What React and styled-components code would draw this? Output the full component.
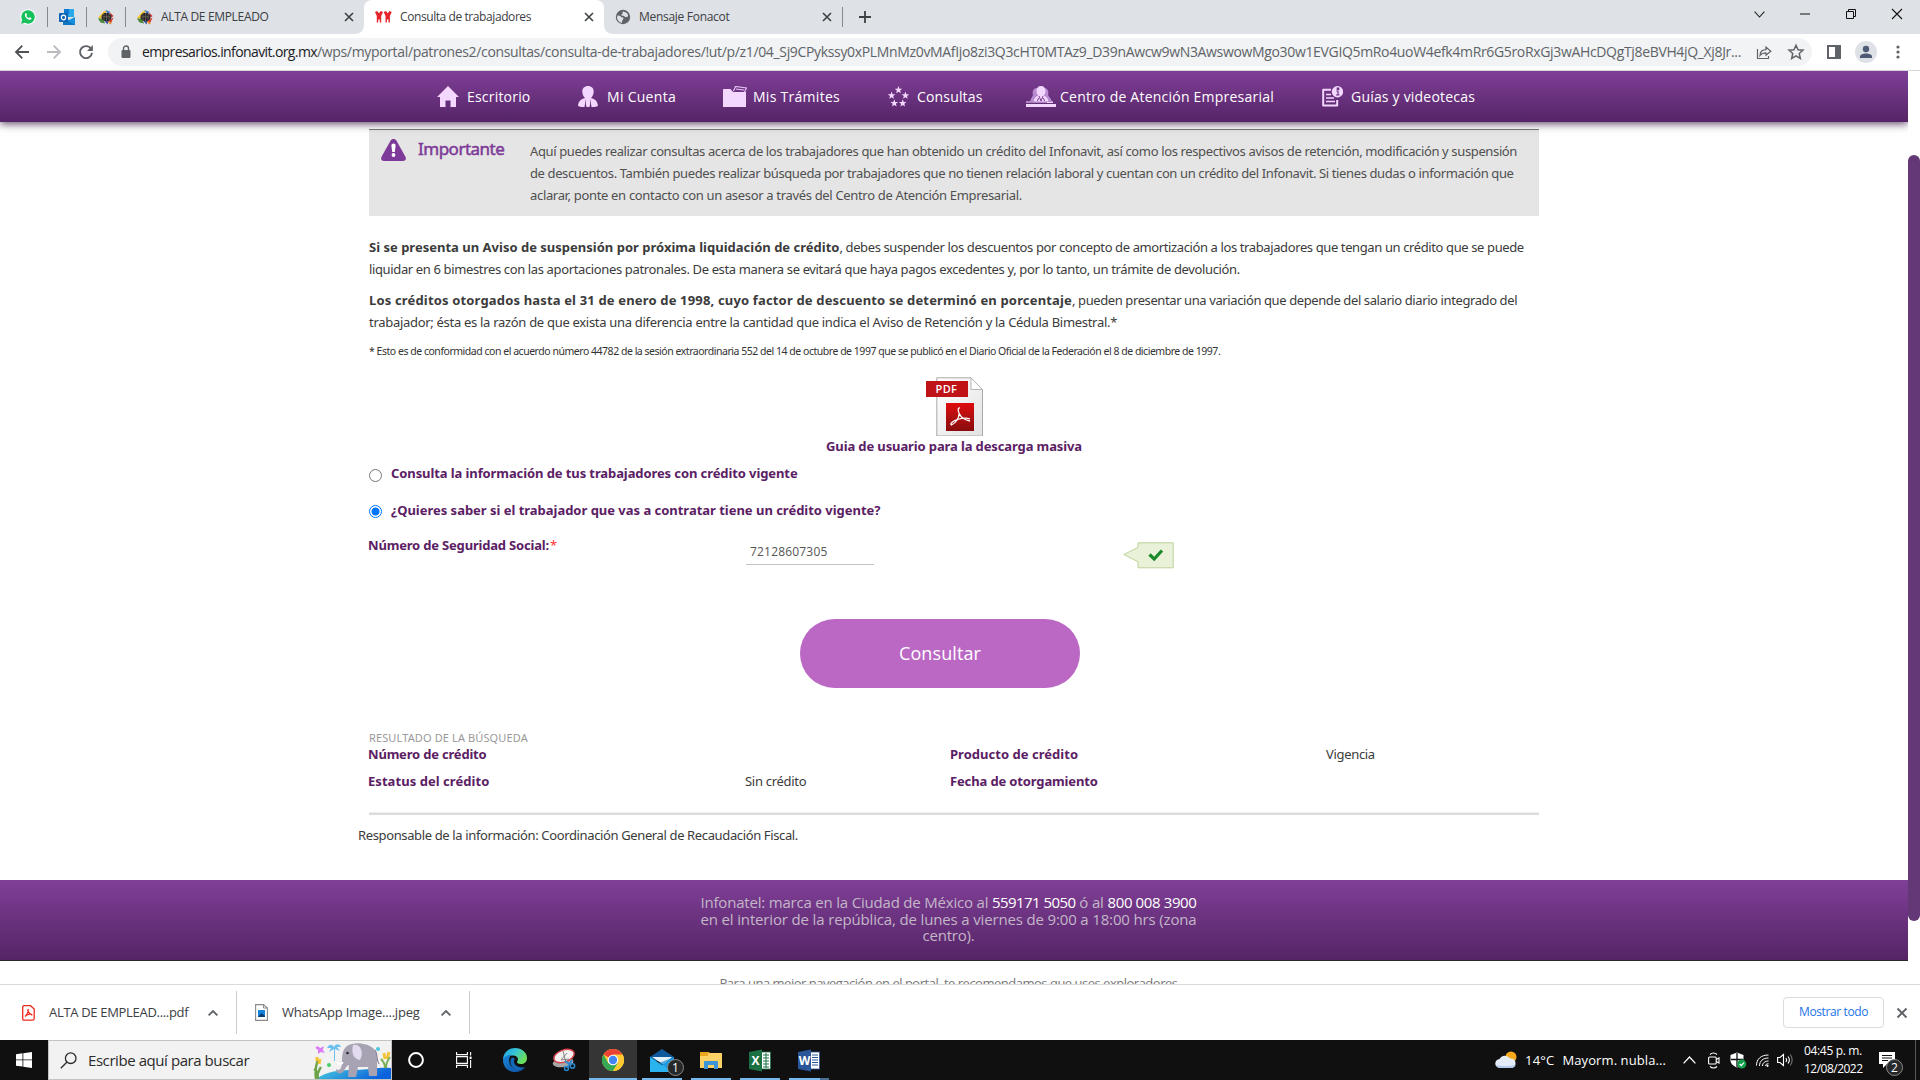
import React from "react";
import styled, { createGlobalStyle, css } from "styled-components";

const ui = '"Open Sans", "Noto Sans", sans-serif';
const body = '"Noto Sans", "Open Sans", sans-serif';

const Global = createGlobalStyle`
  *, *::before, *::after { box-sizing: border-box; }
  html, body { margin: 0; height: 1080px; overflow: hidden; background: #fff; }
  svg { display: block; flex: none; }
`;

const Screen = styled.div`
  width: 1920px;
  height: 1080px;
  display: flex;
  flex-direction: column;
  overflow: hidden;
  font-family: ${ui};
`;

/* Text run with its own tracking. */
const T = styled.span`
  white-space: pre;
  letter-spacing: ${(p) => p.$ls || 0}px;
`;
const Space = styled.i`
  width: ${(p) => p.$w}px;
  flex: none;
`;

/* ---------- browser tabs ---------- */
const TabStrip = styled.div`
  height: 34px;
  flex: none;
  background: #dee1e6;
  display: flex;
  color: #3c4043;
  font-size: 12px;
`;
const Divider = styled.i`
  width: 1px;
  height: 20px;
  background: #85888d;
  flex: none;
`;
const PinnedTab = styled.div`
  width: ${(p) => p.$w}px;
  padding-left: ${(p) => p.$pad}px;
  display: flex;
  align-items: center;
  justify-content: space-between;
`;
const Tab = styled.div`
  width: ${(p) => p.$w}px;
  display: flex;
  align-items: center;
  padding: 0 7px 0 11px;
  position: relative;
  svg:last-of-type { margin-left: auto; }
  ${(p) =>
    p.$active &&
    css`
      background: #fff;
      border-radius: 8px 8px 0 0;
      &::before, &::after {
        content: "";
        position: absolute;
        bottom: 0;
        width: 8px;
        height: 8px;
      }
      &::before { left: -8px; background: radial-gradient(circle at 0 0, transparent 7.5px, #fff 8px); }
      &::after { right: -8px; background: radial-gradient(circle at 100% 0, transparent 7.5px, #fff 8px); }
    `}
`;
const TabTitle = styled.span`
  margin-left: 8px;
  line-height: 34px;
`;
const NewTab = styled.div`
  display: flex;
  align-items: center;
  padding-left: 0;
`;
const WindowControls = styled.div`
  margin-left: auto;
  display: grid;
  grid-template-columns: repeat(4, 46px);
  height: 28px;
  justify-items: center;
  align-items: center;
`;

/* ---------- address bar ---------- */
const Toolbar = styled.div`
  height: 37px;
  flex: none;
  border-bottom: 1px solid #d5d6d8;
  display: flex;
  align-items: center;
  padding-left: 14px;
`;
const NavButtons = styled.div`
  display: flex;
  gap: 16px;
  width: 94px;
`;
const Address = styled.div`
  width: 1704px;
  height: 28px;
  border-radius: 14px;
  background: #f1f3f4;
  display: flex;
  align-items: center;
  padding: 0 9px 0 13px;
  font-size: 14px;
  line-height: 28px;
  color: #5f6368;
`;
const Url = styled.div`
  margin-left: 11px;
  width: 1614px;
  flex: none;
  white-space: nowrap;
  b { font-weight: 400; color: #202124; }
`;
const Tools = styled.div`
  flex: 1;
  display: flex;
  align-items: center;
  padding-left: 15px;
`;
const Avatar = styled.div`
  width: 22px;
  height: 22px;
  border-radius: 50%;
  background: #dee1e6;
  margin: 0 19px 0 14px;
`;

/* ---------- portal ---------- */
const Viewport = styled.div`
  height: 913px;
  flex: none;
  display: flex;
  overflow: hidden;
`;
const Page = styled.div`
  width: 1908px;
  height: 913px;
  overflow: hidden;
`;
const Scrollbar = styled.div`
  width: 12px;
  padding-top: 84px;
  background: #fff;
`;
const Thumb = styled.div`
  height: 766px;
  border-radius: 6px;
  background: #643876;
`;
const Menu = styled.nav`
  height: 51px;
  background: linear-gradient(#7f3f97, #552466);
  box-shadow: 0 2px 8px rgba(50, 20, 60, 0.75);
  position: relative;
  display: grid;
  grid-template-columns: 141px 145px 165px 138px 296px 1fr;
  padding-left: 437px;
  color: #fff;
  font-size: 14px;
`;
const MenuItem = styled.a`
  display: flex;
  align-items: center;
  height: 51px;
  svg { margin-right: ${(p) => p.$gap}px; }
`;
const Content = styled.main`
  margin: 7px 0 0 369px;
  width: 1170px;
  font-family: ${body};
  font-size: 13px;
  line-height: 22px;
  color: #3b3b3b;
`;
const Notice = styled.section`
  height: 87px;
  border-top: 1px solid #7b7b7b;
  background: #e5e5e5;
  display: grid;
  grid-template-columns: 37px 112px 1fr;
  padding: 9px 0 0 12px;
  color: #505050;
`;
const NoticeTitle = styled.h2`
  margin: 0;
  font-size: 17px;
  line-height: 18px;
  padding-top: 1px;
  font-weight: 400;
  color: #7d3a98;
  -webkit-text-stroke: 0.5px #7d3a98;
`;
const NoticeText = styled.div`
  padding-top: 1px;
`;
const Line = styled.div`
  white-space: nowrap;
`;
const Paragraph = styled.div`
  margin-top: ${(p) => p.$mt}px;
  b { font-weight: 700; }
`;
const Footnote = styled.div`
  margin-top: 8px;
  font-size: 10.5px;
  line-height: 20px;
  color: #333;
  white-space: nowrap;
`;
const Purple = styled.span`
  margin-left: ${(p) => p.$pull || 0}px;
  font-weight: 700;
  color: #5b2064;
  white-space: nowrap;
`;
const Guide = styled.div`
  margin-top: 16px;
  display: flex;
  flex-direction: column;
  align-items: center;
  line-height: 20px;
  svg { margin-left: 2px; }
`;
const RadioRow = styled.label`
  margin-top: ${(p) => p.$mt}px;
  display: flex;
  height: 20px;
  line-height: 20px;
`;
const Radio = styled.i`
  width: 13px;
  height: 13px;
  margin: ${(p) => p.$top}px 9px 0 0;
  border-radius: 50%;
  border: 1px solid ${(p) => (p.$on ? "#0075ff" : "#767676")};
  background: ${(p) => (p.$on ? "radial-gradient(circle, #0075ff 3.6px, #fff 4.4px)" : "#fff")};
`;
const FieldRow = styled.div`
  margin-top: 15px;
  height: 36px;
  display: grid;
  grid-template-columns: 377px 377px auto;
  line-height: 20px;
`;
const Required = styled.span`
  color: #f33;
  font-weight: 400;
  margin-left: 1px;
`;
const Input = styled.div`
  width: 128px;
  height: 25px;
  margin-top: 5px;
  border-bottom: 1px solid #c4c4c4;
  padding-left: 4px;
  line-height: 23px;
  font-size: 12px;
  font-family: ${ui};
  color: #555;
`;
const Validation = styled.div`
  padding-top: 7px;
`;
const Submit = styled.div`
  width: 280px;
  height: 69px;
  margin: 48px 0 0 431px;
  border-radius: 34.5px;
  background: #ba68c4;
  color: #fff;
  font: 400 18px/69px ${ui};
  text-align: center;
`;
const ResultTitle = styled.div`
  margin-top: 43px;
  font-size: 11px;
  line-height: 14px;
  color: #999;
`;
const Results = styled.div`
  display: grid;
  grid-template-columns: 376px 205px 376px 1fr;
  grid-auto-rows: 18px;
  row-gap: 9px;
  line-height: 18px;
`;
const Rule = styled.div`
  margin-top: 22px;
  height: 3px;
  background: #dcdcdc;
  border-top: 1px solid #eee;
`;
const Owner = styled.div`
  margin: 10px 0 0 -11px;
  line-height: 20px;
`;
const Footer = styled.footer`
  margin-top: 35px;
  height: 81px;
  border-bottom: 1px solid #2a2a2a;
  background: linear-gradient(#7f3f97, #552466);
  padding: 14px 0 0 698px;
  color: #c3b7c8;
  font-size: 15px;
  line-height: 16.5px;
  b { font-weight: 400; color: #fff; }
`;
const FooterText = styled.div`
  width: 501px;
  text-align: center;
  white-space: nowrap;
`;
const Advice = styled.div`
  margin: 12px 0 0 698px;
  width: 501px;
  text-align: center;
  white-space: nowrap;
  color: #777;
  font: 400 13px/20px ${ui};
`;

/* ---------- downloads ---------- */
const Downloads = styled.div`
  height: 56px;
  flex: none;
  border-top: 1px solid #d9dadc;
  display: flex;
  align-items: center;
  font-size: 13px;
  color: #3c4043;
`;
const Download = styled.div`
  width: ${(p) => p.$w}px;
  height: 43px;
  border-right: 1px solid #c9cbce;
  padding: 0 18px 0 ${(p) => p.$pad}px;
  display: flex;
  align-items: center;
  svg:last-child { margin-left: auto; }
`;
const FileName = styled.span`
  margin: -2px 0 0 14px;
`;
const ShowAll = styled.div`
  margin-left: auto;
  width: 101px;
  height: 31px;
  border: 1px solid #dadce0;
  border-radius: 4px;
  color: #1a73e8;
  font-size: 12px;
  line-height: 28px;
  text-align: center;
`;
const CloseBar = styled.div`
  width: 36px;
  display: flex;
  justify-content: center;
`;

/* ---------- taskbar ---------- */
const Taskbar = styled.div`
  height: 40px;
  flex: none;
  background: #101010;
  display: flex;
  color: #fff;
`;
const Search = styled.div`
  width: 344px;
  border: 1px solid #c4c4c4;
  background: #f2f2f2;
  color: #2b2b2b;
  font-size: 15px;
  line-height: 38px;
  display: flex;
  align-items: center;
  padding-left: 11px;
  overflow: hidden;
  svg:last-child { margin-left: auto; }
`;
const Query = styled.span`
  margin-left: 11px;
`;
const TaskButton = styled.div`
  width: 48px;
  height: 40px;
  margin-right: ${(p) => p.$mr ?? 1}px;
  display: flex;
  align-items: center;
  justify-content: center;
  background: ${(p) => (p.$active ? "#353535" : "transparent")};
  position: relative;
  ${(p) =>
    p.$open &&
    css`
      &::after {
        content: "";
        position: absolute;
        bottom: 0;
        height: 2px;
        width: ${p.$active ? 48 : 40}px;
        background: ${p.$multi ? "linear-gradient(90deg, #76b9ed 31px, #4a6f91 31px)" : "#76b9ed"};
      }
    `}
`;
const Count = styled.span`
  position: absolute;
  left: ${(p) => p.$x}px;
  top: ${(p) => p.$y}px;
  width: 17px;
  height: 17px;
  border-radius: 50%;
  border: 1px solid #8a8a8a;
  background: #26282a;
  color: #fff;
  font-size: 12px;
  line-height: 15px;
  text-align: center;
`;
const Tray = styled.div`
  margin-left: auto;
  display: flex;
  align-items: center;
  font-size: 13px;
`;
const Weather = styled.div`
  display: flex;
  align-items: center;
  width: 188px;
`;
const Status = styled.div`
  display: grid;
  grid-template-columns: 25px 22px 26px 21px 27px;
  align-items: center;
`;
const Clock = styled.div`
  font-size: 12px;
  line-height: 18px;
  width: 75px;
  display: flex;
  flex-direction: column;
  align-items: flex-start;
`;
const Alerts = styled.div`
  width: 37px;
  height: 40px;
  padding-top: 12px;
  border-right: 1px solid #5a5a5a;
  margin-right: 4px;
  position: relative;
`;

/* ---------- drawings ---------- */
const Close = ({ s = 8, c = "#3c4043", box = 16, sw = 1.6 }) => (
  <svg width={box} height={box} viewBox={`${-box / 2} ${-box / 2} ${box} ${box}`}>
    <path d={`M${-s / 2} ${-s / 2}L${s / 2} ${s / 2}M${s / 2} ${-s / 2}L${-s / 2} ${s / 2}`} stroke={c} strokeWidth={sw} />
  </svg>
);
const WhatsApp = () => (
  <svg width="16" height="16" viewBox="0 0 16 16">
    <circle cx="8" cy="8" r="7.8" fill="#fff" />
    <path d="M1.2 14.8l1-3.6A6.7 6.7 0 1 1 4.8 13.8z" fill="#16c05b" />
    <path d="M5.3 4.4c.5-.5 1-.3 1.2.2l.5 1.2c.1.5-.5.8-.6 1.1.5 1 1.4 1.8 2.4 2.2.4-.1.6-.8 1.1-.8l1.4.7c.4.3 0 1.2-.5 1.5-1.2.8-3 .1-4.300-1.200S4.300 5.500 5.300 4.400z" fill="#fff" />
  </svg>
);
const Outlook = () => (
  <svg width="16" height="16" viewBox="0 0 16 16">
    <path d="M5 0h10v8H5z" fill="#28a8ea" />
    <path d="M5 0h5v5H5z" fill="#0f78d4" />
    <path d="M4 8l6 3 6-3v8H4z" fill="#1490df" />
    <path d="M4 9l12 7H4z" fill="#0a5ba8" opacity=".5" />
    <rect x="0" y="4" width="9" height="9" rx=".8" fill="#0f64b5" />
    <ellipse cx="4.500" cy="8.500" rx="2.100" ry="2.400" fill="none" stroke="#fff" strokeWidth="1.200" />
  </svg>
);
const Emblem = () => (
  <svg width="16" height="16" viewBox="0 0 16 16">
    <path d="M0 9l5-6 4-2-4 9z" fill="#f2c230" />
    <path d="M7 1l5 1.500-1 3z" fill="#3f79c4" />
    <path d="M0 9.500l5 0 2 5-4.500-1z" fill="#4d8a3b" />
    <path d="M9.500 12l6-3.500-3 7z" fill="#d53a2c" />
    <path d="M11.500 3l4 4-2 1.500z" fill="#c9332c" />
    <path d="M6.500 12l4 0-1 3.500z" fill="#3b57b0" />
    <path d="M11 12l3 3-4-1z" fill="#e9b52b" />
    <ellipse cx="8.500" cy="8" rx="5" ry="4.300" fill="#24262b" />
    <path d="M6 5v6M8.500 4v8M11 5v6M4.500 7.800h8" stroke="#776a55" strokeWidth=".7" />
  </svg>
);
const Infonavit = () => (
  <svg width="17" height="12" viewBox="0 0 17 12" fill="#e5252c">
    <path d="M0 1l2.200-1L4 2.300 5.800 0 8 1 6.200 5v6.500H4.800V8.500H3.200v3H1.800V5z" />
    <path d="M8.700 1l2.200-1 1.800 2.300L14.500 0l2.200 1-1.800 4v6.500h-1.400V8.500h-1.600v3h-1.400V5z" />
  </svg>
);
const Globe = () => (
  <svg width="16" height="16" viewBox="0 0 16 16">
    <circle cx="8" cy="8" r="7.200" fill="#5f6368" />
    <path d="M2.500 6.500c2 0 3 .5 3.500 1.500l2 .5c1 .8.300 2-.5 2.500l-.8 3c-2.500-.5-4.600-3-4.700-5.500zM8 2.500c-1 1 0 1.500-.5 2.300L6 6c.5 1 2 .5 3 1l1.500 1.200 2.500-.7c.5-2.500-1.500-4.500-5-5z" fill="#dee1e6" />
  </svg>
);
const Arrow = ({ flip, c }) => (
  <svg width="16" height="16" viewBox="0 0 16 16" fill="none" stroke={c} strokeWidth="1.800" transform={flip ? "scale(-1 1)" : undefined}>
    <path d="M15 8H2M8.300 1.700L2 8l6.300 6.300" />
  </svg>
);
const Reload = () => (
  <svg width="16" height="16" viewBox="0 0 16 16">
    <path d="M13.300 5.200A6 6 0 1 0 14 8.800" fill="none" stroke="#5f6368" strokeWidth="1.900" />
    <path d="M14.900 1v6H9z" fill="#5f6368" />
  </svg>
);
const Lock = () => (
  <svg width="10" height="14" viewBox="0 0 10 14">
    <rect x=".5" y="5" width="9" height="8" rx="1" fill="#5f6368" />
    <path d="M2.500 5V3.500a2.500 2.500 0 0 1 5 0V5" fill="none" stroke="#5f6368" strokeWidth="1.400" />
  </svg>
);
const Share = () => (
  <svg width="16" height="16" viewBox="0 0 16 16" fill="none" stroke="#5f6368" strokeWidth="1.200">
    <path d="M1.500 5v9.500h11V12M4 11.500c.3-4 2.500-5.800 6-5.800V3l4.800 4.300L10 11.300V8.800c-3 0-4.500.8-6 2.700z" />
  </svg>
);
const Star = () => (
  <svg width="18" height="18" viewBox="0 0 24 24" fill="none" stroke="#5f6368" strokeWidth="2">
    <path d="M12 3l2.700 6 6.600.6-5 4.400 1.500 6.500L12 17.100 6.200 20.500l1.500-6.500-5-4.400 6.600-.6z" />
  </svg>
);
const SidePanel = () => (
  <svg width="14" height="14" viewBox="0 0 14 14">
    <path fillRule="evenodd" d="M0 0h14v14H0zM2 2v10h6V2z" fill="#5f6368" />
  </svg>
);
const House = () => (
  <svg width="22" height="21" viewBox="0 0 22 21"><path d="M11 0l11 11h-3v10h-5.500v-6.500h-5V21H3V11H0z" fill="#f3d7ff" /></svg>
);
const Person = () => (
  <svg width="20" height="21" viewBox="0 0 20 21">
    <path fill="#f3d7ff" d="M10 0c3.500 0 5.700 2.300 5.700 5.500 0 2.500-1.200 5-2.700 6.500 4 1.300 6.500 3 7 8-2 1-4.500 1-7 1H7c-2.500 0-5 0-7-1 .5-5 3-6.700 7-8-1.500-1.500-2.700-4-2.700-6.500C4.300 2.300 6.500 0 10 0z" />
    <path d="M8 12.500L6.500 21h2l-.6-2.500zM12 12.500l1.500 8.500h-2l.6-2.500z" fill="#5e2a70" />
  </svg>
);
const Folder = () => (
  <svg width="24" height="21" viewBox="0 0 24 21">
    <path d="M0 3.500L1 3h6.500L10 6h13v15H0z" fill="#f3d7ff" />
    <path d="M10.500 5l2-4.500 11 1.500-2 4M13 3l8 1" stroke="#e5c5f2" strokeWidth="1.200" fill="none" />
  </svg>
);
const starPoints = (cx, cy, r) =>
  Array.from({ length: 10 }, (_, i) => {
    const a = (Math.PI / 5) * i - Math.PI / 2;
    const q = i % 2 ? r * 0.42 : r;
    return `${(cx + q * Math.cos(a)).toFixed(2)},${(cy + q * Math.sin(a)).toFixed(2)}`;
  }).join(" ");
const Stars = () => (
  <svg width="21" height="21" viewBox="0 0 21 21" fill="#f3d7ff">
    {[[10.5, 4], [3.6, 9.5], [17.4, 9.5], [6.3, 17.3], [14.7, 17.3]].map(([x, y]) => (
      <polygon key={x} points={starPoints(x, y, 4)} />
    ))}
  </svg>
);
const Advisors = () => (
  <svg width="30" height="21" viewBox="0 0 30 21">
    <path d="M10 2c-3 1-4 4-3 7l-3 6h22l-4-6c1-3 0-6-3-7z" fill="#b98bd0" />
    <path d="M15 0c3 0 4.500 2 4.500 5S18 9 17.500 9.500c3 1 4.500 3 5 6h-15c.5-3 2-5 5-6C11.500 8.500 10.500 8 10.500 5S12 0 15 0z" fill="#f3d7ff" />
    <path d="M13 10l2 5 2-5M11.500 15l1-3M18.500 15l-1-3" stroke="#6a2f80" strokeWidth=".9" fill="none" />
    <path d="M0 18h30v3H0zM21 15.500h6v1.500h-6zM0 15.500h22v1H0z" fill="#f3d7ff" />
  </svg>
);
const Guides = () => (
  <svg width="21" height="21" viewBox="0 0 21 21">
    <path d="M9 3.800H1.200v15.700h14V14" fill="none" stroke="#f3d7ff" strokeWidth="2" strokeLinejoin="round" />
    <path d="M4 8.500h5M4 12h8M4 15.500h9" stroke="#f3d7ff" strokeWidth="1.700" />
    <circle cx="15.500" cy="5.800" r="5.700" fill="#f3d7ff" />
    <path d="M14.300 5h1.700v4M14 9h3.500M15.300 2.200h1.400v1.300h-1.400z" stroke="#6c2f82" strokeWidth="1.200" fill="none" />
  </svg>
);
const Warning = () => (
  <svg width="25" height="22" viewBox="0 0 25 22">
    <path d="M12.500 0c1.500 0 2.300.6 3 1.800l8.800 15.700c1.300 2.500.3 4.500-2.300 4.500H3C.4 22-.6 20 .7 17.500L9.500 1.800C10.200.6 11 0 12.500 0z" fill="#7d3a98" />
    <path d="M10.400 6.500c0-1.300.8-2 2.100-2s2.100.7 2.100 2l-.8 6.500h-2.600z" fill="#fff" />
    <circle cx="12.500" cy="16" r="1.900" fill="#fff" />
  </svg>
);
const PdfWord = styled.text`
  font: 600 11px ${ui};
  letter-spacing: 0.4px;
`;
const Pdf = () => (
  <svg width="58" height="59" viewBox="0 0 58 59">
    <defs>
      <linearGradient id="sheet" x1="0" y1="0" x2="1" y2="1"><stop offset="0" stopColor="#fff" /><stop offset="1" stopColor="#e2e2e2" /></linearGradient>
      <linearGradient id="red" x1="0" y1="0" x2="0" y2="1"><stop offset="0" stopColor="#e00b0b" /><stop offset=".5" stopColor="#b00f10" /><stop offset="1" stopColor="#8a0b0c" /></linearGradient>
    </defs>
    <path d="M10.800 .8H45L56.500 13v46H10.800z" fill="url(#sheet)" stroke="#a9a9a9" />
    <path d="M45 .8V12.500H56.500z" fill="#fff" stroke="#b5b5b5" />
    <rect x="0" y="4" width="42" height="16" fill="#bf1318" />
    <PdfWord x="9.500" y="16" fill="#fff">PDF</PdfWord>
    <rect x="20" y="26" width="28" height="28" fill="url(#red)" />
    <path d="M34 31c-2.500-.5-2 3-.8 5.500S38 43 44 44M33 37c0 4-3 9-7.500 11-2-1 1-4 6-5.500s9-2 12.500-.5" fill="none" stroke="#fff" strokeWidth="1.300" />
  </svg>
);
const Valid = () => (
  <svg width="51" height="27" viewBox="0 0 51 27">
    <path d="M.8 12.500L15 5.500V.8h35.200v25H15v-6z" fill="#e9f1d9" stroke="#bdd39a" />
    <path d="M26.500 12.500l4.700 4.500L39 8.500" fill="none" stroke="#1a8a2b" strokeWidth="3.200" />
  </svg>
);
const Caret = ({ w = 10, h = 6, c = "#5f6368", sw = 1.8, down }) => (
  <svg width={w} height={h} viewBox={`0 0 ${w} ${h}`} fill="none" stroke={c} strokeWidth={sw}>
    <path d={down ? `M.6 .6L${w / 2} ${h - 1}L${w - 0.6} .6` : `M.6 ${h - 0.6}L${w / 2} 1L${w - 0.6} ${h - 0.6}`} />
  </svg>
);
const PdfFile = () => (
  <svg width="13" height="16" viewBox="0 0 13 16" fill="none" stroke="#f0281c">
    <path d="M2 .7h6.500L12.200 4v9.500a1.700 1.700 0 0 1-1.700 1.700H2a1.300 1.300 0 0 1-1.300-1.300V2A1.300 1.300 0 0 1 2 .7z" strokeWidth="1.300" />
    <path d="M6.300 4.500c-1.300 0 0 3.500 3.500 5.500.6-1.200-3.500-1.200-6.300.8-.8 1.500 2.800-2 2.800-6.300z" strokeWidth="1.200" />
  </svg>
);
const ImageFile = () => (
  <svg width="13" height="17" viewBox="0 0 13 17">
    <path d="M.6 .6h8L12.400 4v12.400H.6z" fill="#fff" stroke="#8a8a8a" strokeWidth="1.100" />
    <path d="M8.500 .6V4h4" fill="none" stroke="#8a8a8a" />
    <rect x="3" y="6" width="7" height="7" fill="#1583dc" />
    <path d="M3 13l3.500-4L10 12v1z" fill="#0b3f74" />
  </svg>
);
const Windows = () => (
  <svg width="16" height="16" viewBox="0 0 16 16" fill="#fff">
    <path d="M0 2.200L6.500 1.300V7.500H0zM7.300 1.200L16 0v7.500H7.300zM0 8.300h6.500v6.300L0 13.700zM7.300 8.300H16V16l-8.700-1.200z" />
  </svg>
);
const Magnifier = () => (
  <svg width="17" height="17" viewBox="0 0 17 17" fill="none" stroke="#2b2b2b" strokeWidth="1.300">
    <circle cx="10.700" cy="6.200" r="5.300" /><path d="M7 10L.8 16.200" />
  </svg>
);
const Elephant = () => (
  <svg width="78" height="38" viewBox="0 0 78 38">
    <defs><linearGradient id="lake" x1="0" x2="1" y1="0" y2=".3"><stop offset="0" stopColor="#4fd0dd" /><stop offset="1" stopColor="#0a62dc" /></linearGradient></defs>
    <path d="M4 38c8-8 24-9 38-9s24-3 36-2v11z" fill="url(#lake)" />
    <path d="M4 5l3.500 2L11 5l-1.200 4L12 12l-4-1-3 2V9L2.500 7z" fill="#dd7cf5" />
    <path d="M14 7c2-4 5-4 7-1 2-4 6-3 7 0h-4l3 4-5-2v12h-1V8l-5 3 2-4z" fill="#6cc0ee" />
    <path d="M34 5c7-5 22-3 27 3 4 5 3 14 3 27h-8l-1-9H45l-2 10h-8l1-12c-3 1-4 4-5 6-3 4-8 3-8-2 4 3 6-1 6-8 0-7 1-12 5-15z" fill="#a8a3b3" />
    <path d="M40 4c8-2 11 8 7 15-6-1-9-6-7-15z" fill="#e3dbef" />
    <path d="M62 9c3 4 1 10 4 14" fill="none" stroke="#8b8597" strokeWidth="1.200" />
    <circle cx="34.500" cy="12" r="1.300" fill="#2b2438" />
    <path d="M24 21c2 3 5 3 6 0" stroke="#fff" strokeWidth="1.500" fill="none" />
    <circle cx="16" cy="24" r="2" fill="#4cce6a" /><circle cx="65" cy="8" r="2" fill="#4bc8df" />
    <path d="M3 38c-1-6 0-14 2-20M1 28c2 1 4 5 4 10M8 26c-2 3-4 7-4 12" stroke="#6da349" strokeWidth="2.400" fill="none" />
    <path d="M4 16v4M7 18l-1 5M71 12l1 6M76 11l-2 7" stroke="#f2c53d" strokeWidth="3" />
    <path d="M68 18c3 3 4 6 4 9M77 16c-3 4-4 8-4 11" stroke="#7aaf57" strokeWidth="2" fill="none" />
  </svg>
);
const Cortana = () => (
  <svg width="18" height="18" viewBox="0 0 18 18"><circle cx="9" cy="9" r="6.900" fill="none" stroke="#fff" strokeWidth="2" /></svg>
);
const TaskView = () => (
  <svg width="16" height="16" viewBox="0 0 16 16" fill="none" stroke="#fff" strokeWidth="1.100">
    <path d="M.6 0v2.600h10.800V0M.6 16v-2.600h10.800V16M.6 4.600h10.800v6.800H.6zM14.600 0v3.500M14.600 8v8" /><rect x="13.600" y="4.600" width="2" height="2.400" fill="#fff" stroke="none" />
  </svg>
);
const Edge = () => (
  <svg width="24" height="24" viewBox="0 0 24 24">
    <defs>
      <linearGradient id="edgeTop" x1="0" x2="1" y1="0" y2=".5"><stop offset="0" stopColor="#1f9fe0" /><stop offset=".5" stopColor="#36c4d6" /><stop offset="1" stopColor="#6be05a" /></linearGradient>
      <linearGradient id="edgeLow" x1="0" x2="1" y1="0" y2="1"><stop offset="0" stopColor="#1a86d8" /><stop offset="1" stopColor="#0c4fa0" /></linearGradient>
    </defs>
    <path d="M0 12C0 5 5 0 12 0c7 0 12 4.500 12 10 0 4-3 6-6 6-2.500 0-4-1-4-2 0-.8 1-1 1-2.800C15 9 12.500 7.500 9.500 7.500 4.500 7.500 1 10 0 12z" fill="url(#edgeTop)" />
    <path d="M0 12c.5-3 4-5.500 9-5.500C5 9 5.500 15 8.500 18.500c3 3 9 3.500 13.500.5-2 3.300-6 5-10 5C5 24 0 19 0 12z" fill="url(#edgeLow)" />
    <path d="M9 9.500c-3 3-1.500 8 1.500 10.500 3.500 2.500 8.500 2 11.500-1-5 1.500-11-1-11-5.500 0-1.500.5-2.500 1-3z" fill="#1468b8" />
  </svg>
);
const Snip = () => (
  <svg width="24" height="24" viewBox="0 0 24 24">
    <ellipse cx="11" cy="14.500" rx="10.500" ry="4.500" fill="#a7a7a7" transform="rotate(-8 11 14)" />
    <ellipse cx="12" cy="8" rx="10.600" ry="6" fill="#f5f1f1" stroke="#d8434c" strokeWidth="1.400" transform="rotate(-20 12 8)" />
    <path d="M11 3l3 12M15 5l-6 7 8-1" stroke="#777" strokeWidth=".9" fill="none" />
    <path d="M13 13l6 4M20 12l-5 8" stroke="#2a88cf" strokeWidth="1.800" />
    <circle cx="14.500" cy="20.500" r="2" fill="none" stroke="#2a88cf" strokeWidth="1.500" /><circle cx="20.500" cy="18" r="2.200" fill="none" stroke="#2a88cf" strokeWidth="1.500" />
  </svg>
);
const Chrome = () => (
  <svg width="22" height="22" viewBox="0 0 22 22">
    <circle cx="11" cy="11" r="11" fill="#fcc934" />
    <path d="M11 11L1.470 5.500A11 11 0 0 1 20.530 5.500z" fill="#ea4335" />
    <path d="M1.470 5.500A11 11 0 0 0 11 22l5.300-8.500-9.800 1z" fill="#34a853" />
    <path d="M20.530 5.500H11l5.300 8L11 22a11 11 0 0 0 9.530-16.500z" fill="#fcc934" />
    <circle cx="11" cy="11" r="5.300" fill="#fff" /><circle cx="11" cy="11" r="4.200" fill="#4285f4" />
  </svg>
);
const Mail = () => (
  <svg width="24" height="23" viewBox="0 0 24 23">
    <path d="M0 8l12-8 12 8v4H0z" fill="#0f5a9c" /><path d="M2 8h20l-8 8z" fill="#e6f2fa" />
    <path d="M0 8l12 8 12-8v15H0z" fill="#2bb3f0" /><path d="M24 8v15L9 14z" fill="#1490dc" opacity=".7" />
  </svg>
);
const Explorer = () => (
  <svg width="22" height="19" viewBox="0 0 22 19">
    <path d="M0 1h9l2 2H0z" fill="#dc9a14" /><path d="M0 3.500L10 2h12v15H0z" fill="#fbd266" /><path d="M0 1h8v4H0z" fill="#e8a51e" />
    <path d="M4 18v-7a1 1 0 0 1 1-1h12a1 1 0 0 1 1 1v7h-4v-4H8v4z" fill="#3d94d6" />
  </svg>
);
const OfficeLetter = styled.text`
  font: 700 12px ${ui};
  text-anchor: middle;
`;
const Office = ({ c, letter, grid }) => (
  <svg width="22" height="23" viewBox="0 0 22 23">
    <rect x="12" y="3" width="9.500" height="17" fill="#fff" stroke={c} strokeWidth=".8" />
    <path d={grid ? "M14 6h6M14 9h6M14 12h6M14 15h6M14 18h6M17 4v15" : "M14 6h6M14 8.500h6M14 11h6M14 13.500h6M14 16h6"} stroke={c} />
    <path d="M0 3l13-2.500v22L0 20z" fill={c} />
    <OfficeLetter x="6.500" y="16" fill="#fff">{letter}</OfficeLetter>
  </svg>
);
const Cloud = () => (
  <svg width="22" height="18" viewBox="0 0 22 18">
    <circle cx="16" cy="6" r="5.500" fill="#f8a91c" />
    <path d="M5 17a4.500 4.500 0 0 1-.5-9A6 6 0 0 1 15 7.500 4.800 4.800 0 0 1 16.500 17z" fill="#e4ecf8" />
    <path d="M1 14c1 2 2.500 3 4 3h11.500c2 0 4-1.500 4-3.500-4 2-14 2-19.500.5z" fill="#b5cbec" />
  </svg>
);
const MeetNow = () => (
  <svg width="12" height="17" viewBox="0 0 12 17" fill="none" stroke="#fff" strokeWidth="1.100">
    <rect x=".6" y="5" width="7.600" height="7" rx="1" /><path d="M8.200 7.500L11 6v5L8.200 9.500M2 2.500c2-2 5-2 7 0M2 14.500c2 2 5 2 7 0" />
  </svg>
);
const Shield = () => (
  <svg width="17" height="17" viewBox="0 0 17 17">
    <path d="M7 .5L13.500 3v5c0 4-3 6-6.500 7.500C3.500 14 .5 12 .5 8V3z" fill="#fff" /><path d="M7 1v14M1 7.500h12.500" stroke="#101010" strokeWidth="1.300" />
    <circle cx="11.800" cy="12" r="4.500" fill="#13a04a" /><path d="M9.600 12l1.600 1.700 2.800-3" stroke="#fff" fill="none" strokeWidth="1.200" />
  </svg>
);
const Wifi = () => (
  <svg width="13" height="13" viewBox="0 0 13 13" fill="none" stroke="#fff">
    <path d="M.5 11.500C.5 5 5 1 12.500 1M3.500 12C3.500 7 7 4 12.500 4M6.500 12c0-3 2.500-5 6-5M9.500 12c0-1.300 1-2.300 3-2.300" />
    <circle cx="11.500" cy="11.800" r="1.100" fill="#fff" stroke="none" />
  </svg>
);
const Speaker = () => (
  <svg width="17" height="14" viewBox="0 0 17 14" fill="none" stroke="#fff" strokeWidth="1.100">
    <path d="M.6 4.500H3L6.500 1.500v11L3 9.500H.6zM8.800 5c.8 1 .8 3 0 4M11 3.500c1.600 2 1.600 5 0 7" /><path d="M13.200 1.500c2.600 3 2.600 8 0 11" stroke="#777" />
  </svg>
);
const Note = () => (
  <svg width="17" height="17" viewBox="0 0 17 17"><path d="M0 0h16v12H8l-4 4v-4H0z" fill="#fff" /><path d="M3 3.500h10M3 6h10M3 8.500h6" stroke="#101010" strokeWidth="1.100" /></svg>
);

const MENU = [
  [House, "Escritorio", 8, 0.198],
  [Person, "Mi Cuenta", 9, 0.29],
  [Folder, "Mis Trámites", 6, 0.277],
  [Stars, "Consultas", 8, 0.16],
  [Advisors, "Centro de Atención Empresarial", 4, 0.227],
  [Guides, "Guías y videotecas", 8, 0.199],
];

export default function App() {
  return (
    <Screen>
      <Global />
      <TabStrip>
        <PinnedTab $w={48} $pad={20}><WhatsApp /><Divider /></PinnedTab>
        <PinnedTab $w={39} $pad={11}><Outlook /><Divider /></PinnedTab>
        <PinnedTab $w={39} $pad={11}><Emblem /><Divider /></PinnedTab>
        <Tab $w={238}><Emblem /><TabTitle><T $ls={-0.338}>ALTA DE EMPLEADO</T></TabTitle><Close /></Tab>
        <Tab $w={240} $active><Infonavit /><TabTitle><T $ls={-0.416}>Consulta de trabajadores</T></TabTitle><Close /></Tab>
        <Tab $w={238}><Globe /><TabTitle><T $ls={-0.291}>Mensaje Fonacot</T></TabTitle><Close /></Tab>
        <NewTab><Divider /><svg width="46" height="14" viewBox="0 0 46 14"><path d="M16 7h12M22 1v12" stroke="#3c4043" strokeWidth="1.800" /></svg></NewTab>
        <WindowControls>
          <Caret down w={11} h={7} c="#222" sw={1.1} />
          <svg width="10" height="2"><path d="M0 1h10" stroke="#111" strokeWidth="1" /></svg>
          <svg width="10" height="10" fill="none" stroke="#111"><path d="M.5 2.500h7v7h-7zM2.500 2.500v-2h7v7h-2" /></svg>
          <Close s={10} c="#111" sw={1.1} />
        </WindowControls>
      </TabStrip>
      <Toolbar>
        <NavButtons><Arrow c="#4d5156" /><Arrow c="#b9bbbe" flip /><Reload /></NavButtons>
        <Address>
          <Lock />
          <Url>
            <b><T $ls={-0.607}>empresarios.infonavit.org.mx</T></b>
            <T $ls={-0.34}>/wps/myportal/patrones2/consultas/consulta-de-trabajadores/!ut/p/z1/04_Sj9CPykssy0xPLMnMz0vMAfIjo8zi3Q3cHT0MTAz9_D39nAwcw9wN3AwswowMgo30w1EVGIQ5mRo4uoW4efk4mRr6G5roRxGj3wAHcDQgTj8eBVH4jQ_Xj8Jr...</T>
          </Url>
          <Share />
          <Space $w={15} />
          <Star />
        </Address>
        <Tools>
          <SidePanel />
          <Avatar><svg width="22" height="22" viewBox="0 0 22 22" fill="#4f5b75"><circle cx="11" cy="8" r="3.200" /><path d="M5 17v-1.500c0-2 3-3 6-3s6 1 6 3V17z" /></svg></Avatar>
          <svg width="4" height="14" viewBox="0 0 4 14" fill="#5f6368"><circle cx="2" cy="2" r="1.600" /><circle cx="2" cy="7" r="1.600" /><circle cx="2" cy="12" r="1.600" /></svg>
        </Tools>
      </Toolbar>
      <Viewport>
        <Page>
          <Menu>
            {MENU.map(([Icon, label, gap, ls]) => (
              <MenuItem key={label} $gap={gap}><Icon /><T $ls={ls}>{label}</T></MenuItem>
            ))}
          </Menu>
          <Content>
            <Notice>
              <Warning />
              <NoticeTitle><T $ls={-0.5}>Importante</T></NoticeTitle>
              <NoticeText>
                <Line><T $ls={-0.367}>Aquí puedes realizar consultas acerca de los trabajadores que han obtenido un crédito del Infonavit, así como los respectivos avisos de retención, modificación y suspensión</T></Line>
                <Line><T $ls={-0.385}>de descuentos. También puedes realizar búsqueda por trabajadores que no tienen relación laboral y cuentan con un crédito del Infonavit. Si tienes dudas o información que</T></Line>
                <Line><T $ls={-0.328}>aclarar, ponte en contacto con un asesor a través del Centro de Atención Empresarial.</T></Line>
              </NoticeText>
            </Notice>
            <Paragraph $mt={20}>
              <Line><b><T $ls={0.007}>Si se presenta un Aviso de suspensión por próxima liquidación de crédito</T></b><T $ls={-0.388}>, debes suspender los descuentos por concepto de amortización a los trabajadores que tengan un crédito que se puede</T></Line>
              <Line><T $ls={-0.364}>liquidar en 6 bimestres con las aportaciones patronales. De esta manera se evitará que haya pagos excedentes y, por lo tanto, un trámite de devolución.</T></Line>
            </Paragraph>
            <Paragraph $mt={9}>
              <Line><b><T $ls={0.162}>Los créditos otorgados hasta el 31 de enero de 1998, cuyo factor de descuento se determinó en porcentaje</T></b><T $ls={-0.4}>, pueden presentar una variación que depende del salario diario integrado del</T></Line>
              <Line><T $ls={-0.299}>trabajador; ésta es la razón de que exista una diferencia entre la cantidad que indica el Aviso de Retención y la Cédula Bimestral.*</T></Line>
            </Paragraph>
            <Footnote><T $ls={-0.472}>* Esto es de conformidad con el acuerdo número 44782 de la sesión extraordinaria 552 del 14 de octubre de 1997 que se publicó en el Diario Oficial de la Federación el 8 de diciembre de 1997.</T></Footnote>
            <Guide><Pdf /><Purple><T $ls={-0.118}>Guia de usuario para la descarga masiva</T></Purple></Guide>
            <RadioRow $mt={7}><Radio $top={6} /><Purple><T $ls={-0.095}>Consulta la información de tus trabajadores con crédito vigente</T></Purple></RadioRow>
            <RadioRow $mt={17}><Radio $top={5} $on /><Purple><T $ls={-0.02}>¿Quieres saber si el trabajador que vas a contratar tiene un crédito vigente?</T></Purple></RadioRow>
            <FieldRow>
              <Purple $pull={-1}><T $ls={-0.183}>Número de Seguridad Social:</T><Required>*</Required></Purple>
              <Input><T $ls={0.183}>72128607305</T></Input>
              <Validation><Valid /></Validation>
            </FieldRow>
            <Submit><T $ls={0.095}>Consultar</T></Submit>
            <ResultTitle><T $ls={0.12}>RESULTADO DE LA BÚSQUEDA</T></ResultTitle>
            <Results>
              <Purple $pull={-1}><T $ls={-0.192}>Número de crédito</T></Purple><span />
              <Purple><T $ls={0.03}>Producto de crédito</T></Purple><span><T $ls={-0.32}>Vigencia</T></span>
              <Purple $pull={-1}><T $ls={0.05}>Estatus del crédito</T></Purple><span><T $ls={-0.29}>Sin crédito</T></span>
              <Purple><T $ls={-0.14}>Fecha de otorgamiento</T></Purple>
            </Results>
            <Rule />
            <Owner><T $ls={-0.368}>Responsable de la información: Coordinación General de Recaudación Fiscal.</T></Owner>
          </Content>
          <Footer>
            <FooterText>
              <Line><T $ls={-0.195}>Infonatel: marca en la Ciudad de México al </T><b><T $ls={-0.561}>559171 5050</T></b><T $ls={-0.141}> ó al </T><b><T $ls={-0.38}>800 008 3900</T></b></Line>
              <Line><T $ls={-0.152}>en el interior de la república, de lunes a viernes de 9:00 a 18:00 hrs (zona</T></Line>
              <Line><T $ls={-0.209}>centro).</T></Line>
            </FooterText>
          </Footer>
          <Advice><T $ls={-0.493}>Para una mejor navegación en el portal, te recomendamos que uses exploradores</T></Advice>
        </Page>
        <Scrollbar><Thumb /></Scrollbar>
      </Viewport>
      <Downloads>
        <Download $w={237} $pad={22}><PdfFile /><FileName><T $ls={-0.31}>ALTA DE EMPLEAD....pdf</T></FileName><Caret /></Download>
        <Download $w={233} $pad={18}><ImageFile /><FileName><T $ls={-0.2}>WhatsApp Image....jpeg</T></FileName><Caret /></Download>
        <ShowAll><T $ls={-0.389}>Mostrar todo</T></ShowAll>
        <CloseBar><Close s={9} c="#5f6368" sw={1.9} /></CloseBar>
      </Downloads>
      <Taskbar>
        <TaskButton $mr={0}><Windows /></TaskButton>
        <Search><Magnifier /><Query><T $ls={-0.43}>Escribe aquí para buscar</T></Query><Elephant /></Search>
        <TaskButton $mr={0}><Cortana /></TaskButton>
        <TaskButton $mr={3}><TaskView /></TaskButton>
        <TaskButton><Edge /></TaskButton>
        <TaskButton><Snip /></TaskButton>
        <TaskButton $open $active><Chrome /></TaskButton>
        <TaskButton $open><Mail /><Count $x={29} $y={19}>1</Count></TaskButton>
        <TaskButton $open><Explorer /></TaskButton>
        <TaskButton $open><Office c="#1d7044" letter="X" grid /></TaskButton>
        <TaskButton $open $multi><Office c="#2a5699" letter="W" /></TaskButton>
        <Tray>
          <Weather><Cloud /><Space $w={8} /><T $ls={0.219}>14°C</T><Space $w={8} /><T $ls={0.091}>Mayorm. nubla...</T></Weather>
          <Status><Caret w={13} h={8} c="#fff" sw={1.3} /><MeetNow /><Shield /><Wifi /><Speaker /></Status>
          <Clock><T $ls={-0.34}>04:45 p. m.</T><T $ls={-0.52}>12/08/2022</T></Clock>
          <Alerts><Note /><Count $x={7} $y={19}>2</Count></Alerts>
        </Tray>
      </Taskbar>
    </Screen>
  );
}
